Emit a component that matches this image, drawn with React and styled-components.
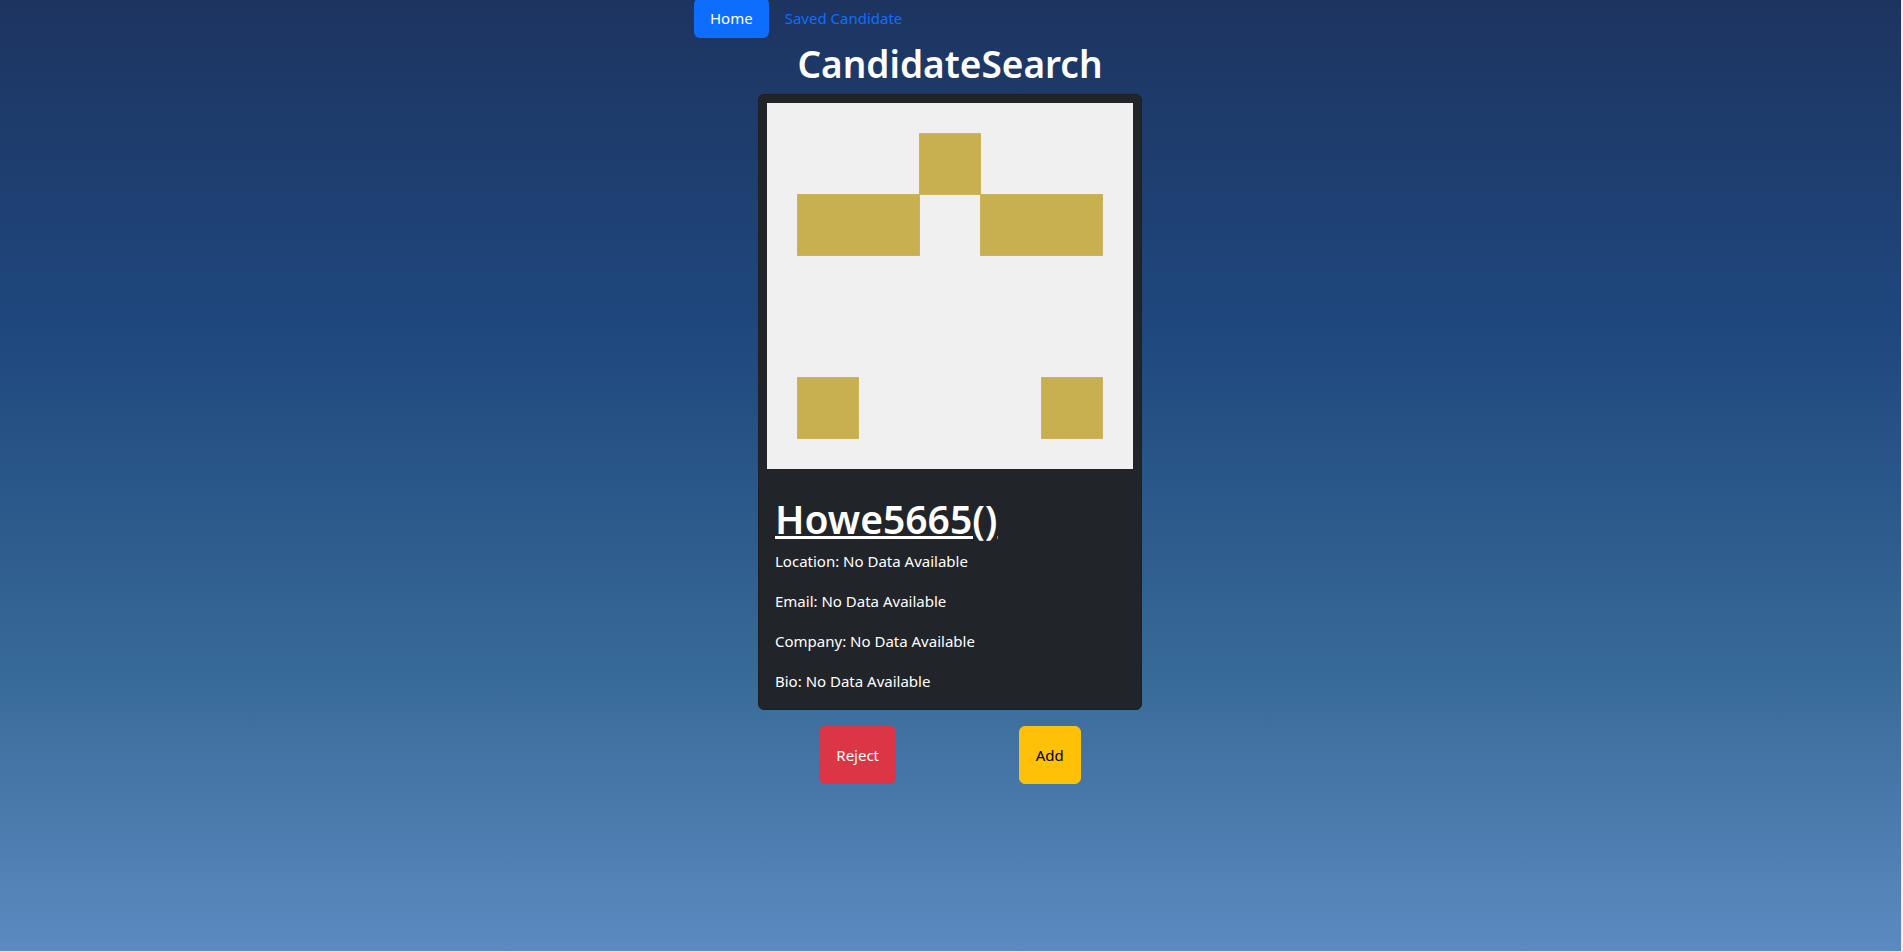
import React from "react";
import styled, { createGlobalStyle } from "styled-components";

const GlobalStyle = createGlobalStyle`
  *, *::before, *::after { box-sizing: border-box; }
  body {
    margin: 0;
    color: #fff;
    background: #f0f0f0;
    font: 400 15px/24px "Noto Sans", sans-serif;
  }
`;

const Page = styled.div`
  min-height: 100vh;
  overflow: hidden;
  padding-right: 1px;
  border-right: 2px solid #f0f0f0;
  border-bottom: 1px solid #d7e3ef;
  background: linear-gradient(#1d3461, #1f487e 35%, #376996 70%, #6290c8 105%);
`;

const Content = styled.div`
  width: 100%;
  max-width: 512px;
  margin: -2px auto 0;
`;

const Nav = styled.nav`
  display: flex;
`;

const NavLink = styled.a`
  padding: 8px 16px;
  border-radius: 6px;
  text-decoration: none;
  color: ${({ $active }) => ($active ? "#fff" : "#0d6efd")};
  background: ${({ $active }) => ($active ? "#0d6efd" : "transparent")};
`;

const Heading = styled.h1`
  margin: 0 0 8px;
  padding-top: 4px;
  font-size: 37px;
  font-weight: 600;
  line-height: 44px;
  text-align: center;
`;

const Card = styled.article`
  max-width: 384px;
  margin: 0 auto;
  padding: 8px;
  border: 1px solid #1c1f23;
  border-radius: 6px;
  background: #212529;
`;

const Avatar = styled.svg`
  display: block;
  width: 100%;
  height: auto;
`;

const Details = styled.div`
  padding: 24px 8px 8px;
`;

const Name = styled(Heading)`
  font-size: 39px;
  text-align: left;
  text-decoration: underline;
`;

const Detail = styled.p`
  margin: 0 0 16px;
  &:last-child { margin-bottom: 0; }
`;

const Actions = styled.div`
  display: flex;
  justify-content: space-around;
  max-width: 384px;
  margin: 16px auto 0;
`;

const ActionButton = styled.button`
  padding: 16px;
  border: 1px solid ${({ $fill }) => $fill};
  border-radius: 6px;
  font: inherit;
  cursor: pointer;
  color: ${({ $ink }) => $ink};
  background: ${({ $fill }) => $fill};
`;

const details = [
  ["Location", "No Data Available"],
  ["Email", "No Data Available"],
  ["Company", "No Data Available"],
  ["Bio", "No Data Available"],
];

export default function App() {
  return (
    <>
      <GlobalStyle />
      <Page>
        <Content>
          <Nav>
            <NavLink href="#home" $active aria-current="page">Home</NavLink>
            <NavLink href="#saved">Saved Candidate</NavLink>
          </Nav>
          <main>
            <Heading>CandidateSearch</Heading>
            <Card>
              <Avatar viewBox="0 0 420 420" role="img" aria-label="Howe5665 avatar">
                <path fill="#f0f0f0" d="M0 0h420v420H0z" />
                <path
                  fill="#c8af50"
                  stroke="#c8af50"
                  strokeWidth="1"
                  d="M175 35h70v70h-70zM35 105h140v70H35zM245 105h140v70H245zM35 315h70v70H35zM315 315h70v70h-70z"
                />
              </Avatar>
              <Details>
                <Name as="h2">Howe5665()</Name>
                {details.map(([label, value]) => (
                  <Detail key={label}>{label}: {value}</Detail>
                ))}
              </Details>
            </Card>
            <Actions>
              <ActionButton type="button" $fill="#dc3545" $ink="#fff">Reject</ActionButton>
              <ActionButton type="button" $fill="#ffc107" $ink="#000">Add</ActionButton>
            </Actions>
          </main>
        </Content>
      </Page>
    </>
  );
}
